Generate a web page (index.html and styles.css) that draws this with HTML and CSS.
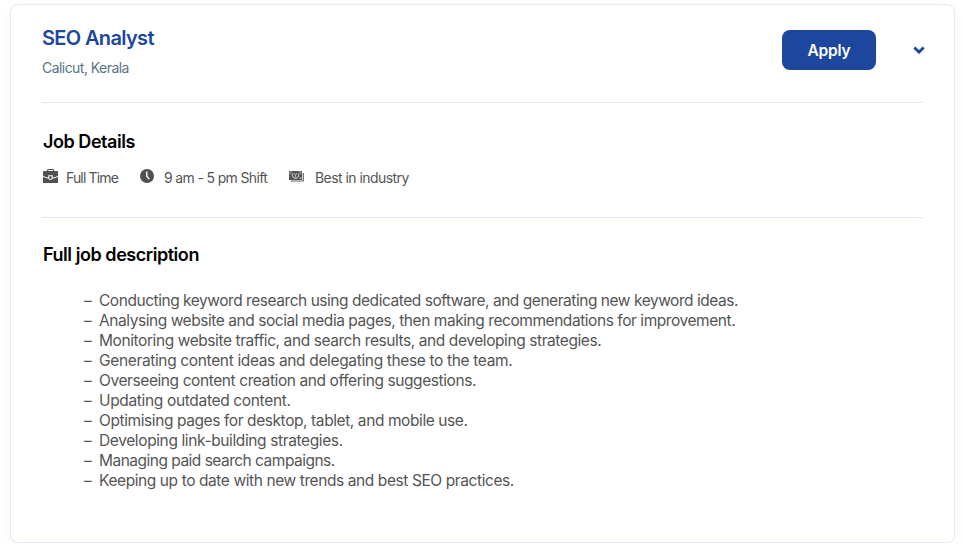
FILE: index.html
```
<!DOCTYPE html>
<html lang="en">
<head>
<meta charset="utf-8">
<title>SEO Analyst</title>
<link rel="stylesheet" href="styles.css">
</head>
<body>
<article class="card">
  <header class="head">
    <div class="heading">
      <h1 class="title">SEO Analyst</h1>
      <p class="place">Calicut, Kerala</p>
    </div>
    <button class="apply" type="button"><span>Apply</span></button>
    <svg class="chevron" width="12" height="8" viewBox="0 0 12 8"><path d="M1.300 1.400 6 6.100l4.700-4.700" fill="none" stroke="#1d479f" stroke-width="2.800"/></svg>
  </header>
  <section class="details">
    <h2 class="subtitle">Job Details</h2>
    <div class="facts">
      <svg width="15" height="14" viewBox="0 0 16 14" preserveAspectRatio="none"><path fill="#505050" fill-rule="evenodd" d="M5 0h6l1 2h3.200c.5 0 .8.3.8.8v3.600c-1.600 1.300-3.500 1.900-5.600 2.100V6.200H5.600V8.500C3.500 8.300 1.600 7.700 0 6.400V2.800C0 2.300.3 2 .8 2H4zM5.700 1l-.5 1h5.600l-.5-1zM0 7.400c1.700 1.200 3.600 1.800 5.700 2 .3 1 1.200 1.400 2.300 1.400s2-.4 2.300-1.400c2.100-.2 4-.8 5.700-2V14H0zM6.700 7.200h2.600v1.600a1.300 1.300 0 0 1-2.600 0z"/></svg>
      <span class="fact time">Full Time</span>
      <svg width="14" height="14" viewBox="0 0 14 14"><circle cx="7" cy="7" r="7" fill="#505050"/><path d="M6.800 2.500v4.800l2.500 2.800" fill="none" stroke="#fff" stroke-width="1.400"/></svg>
      <span class="fact shift">9 am - 5 pm Shift</span>
      <svg width="15" height="11" viewBox="0 0 15 11"><path d="M2 10h12.300V2" fill="none" stroke="#666" stroke-width="1.200"/><path d="M0 0h13v9H0z" fill="#555"/><path d="M1 3V1h2M10 1h2v2" fill="none" stroke="#bbb" stroke-width=".8"/><path d="M3.200 2.500c0 3 1.300 5 3.300 5s3.300-2 3.300-5" fill="none" stroke="#ddd" stroke-width="1"/><path d="M5 2l1.500 2.500L8 2M6.500 4.500v2M10.500 7.500h1.500V6" fill="none" stroke="#ccc" stroke-width=".8"/></svg>
      <span class="fact pay">Best in industry</span>
    </div>
  </section>
  <section class="description">
    <h2 class="subtitle full">Full job description</h2>
    <ul class="tasks">
      <li class="t1"><span>Conducting keyword research using dedicated software, and generating new keyword ideas.</span></li>
      <li class="t2"><span>Analysing website and social media pages, then making recommendations for improvement.</span></li>
      <li class="t3"><span>Monitoring website traffic, and search results, and developing strategies.</span></li>
      <li class="t4"><span>Generating content ideas and delegating these to the team.</span></li>
      <li class="t5"><span>Overseeing content creation and offering suggestions.</span></li>
      <li class="t6"><span>Updating outdated content.</span></li>
      <li class="t7"><span>Optimising pages for desktop, tablet, and mobile use.</span></li>
      <li class="t8"><span>Developing link-building strategies.</span></li>
      <li class="t9"><span>Managing paid search campaigns.</span></li>
      <li class="t10"><span>Keeping up to date with new trends and best SEO practices.</span></li>
    </ul>
  </section>
</article>
</body>
</html>
```
FILE: styles.css
```
* { box-sizing: border-box; margin: 0; padding: 0; }
body { background: #fff; font-family: Inter, "Liberation Sans", sans-serif; overflow: hidden; }
.card { width: 945px; height: 539px; margin: 4px 0 0 10px; padding: 0 31px; background: #fff; border: 1px solid #e6e6f5; border-radius: 8px; box-shadow: 0 5px 16px rgba(0, 0, 0, .035); }
.head { display: flex; align-items: flex-start; height: 98px; border-bottom: 1px solid #e3e8f2; padding-top: 21px; }
.heading { flex: 1; }
.title { color: #1d479f; font-size: 20px; line-height: 24px; font-weight: 600; letter-spacing: -.65px; }
.place { margin-top: 9px; color: #5b7386; font-size: 14px; line-height: 18px; letter-spacing: -.55px; }
.apply { width: 94px; height: 40px; margin-top: 4px; padding-top: 2px; border: 0; border-radius: 8px; background: #1d479f; color: #fff; font: 600 15.5px/38px Inter, sans-serif; letter-spacing: -.15px; }
.chevron { margin: 20px -2px 0 37px; }
.details { height: 115px; padding-top: 29px; border-bottom: 1px solid #e6e6f5; }
.subtitle { margin-left: 1px; color: #000; font-size: 18px; line-height: 20px; font-weight: 600; letter-spacing: -.45px; white-space: nowrap; }
.facts { display: flex; align-items: center; height: 18px; margin-top: 17px; }
.facts svg { flex: none; margin-top: -4px; margin-left: 1px; }
.fact { margin-left: 8px; color: #555; font-size: 14px; line-height: 18px; letter-spacing: -.6px; white-space: nowrap; }
.time { width: 73px; letter-spacing: -.85px; }
.shift { width: 124px; margin-left: 10px; letter-spacing: -.65px; }
.pay { margin-left: 11px; letter-spacing: -.55px; }
.description { padding-top: 27px; }
.tasks { list-style: none; margin-top: 26px; padding-left: 42px; }
.tasks li { display: flex; height: 20px; color: #555; font-size: 15.5px; line-height: 20px; white-space: nowrap; }
.tasks li::before { content: "–"; width: 15px; letter-spacing: 0; }
.t1 { letter-spacing: -.46px; }
.t2 { letter-spacing: -.44px; }
.t3 { letter-spacing: -.42px; }
.t4 { letter-spacing: -.35px; }
.t5 { letter-spacing: -.41px; }
.t6 { letter-spacing: -.34px; }
.t7 { letter-spacing: -.41px; }
.t8 { letter-spacing: -.38px; }
.t9 { letter-spacing: -.51px; }
.t10 { letter-spacing: -.41px; }
```
